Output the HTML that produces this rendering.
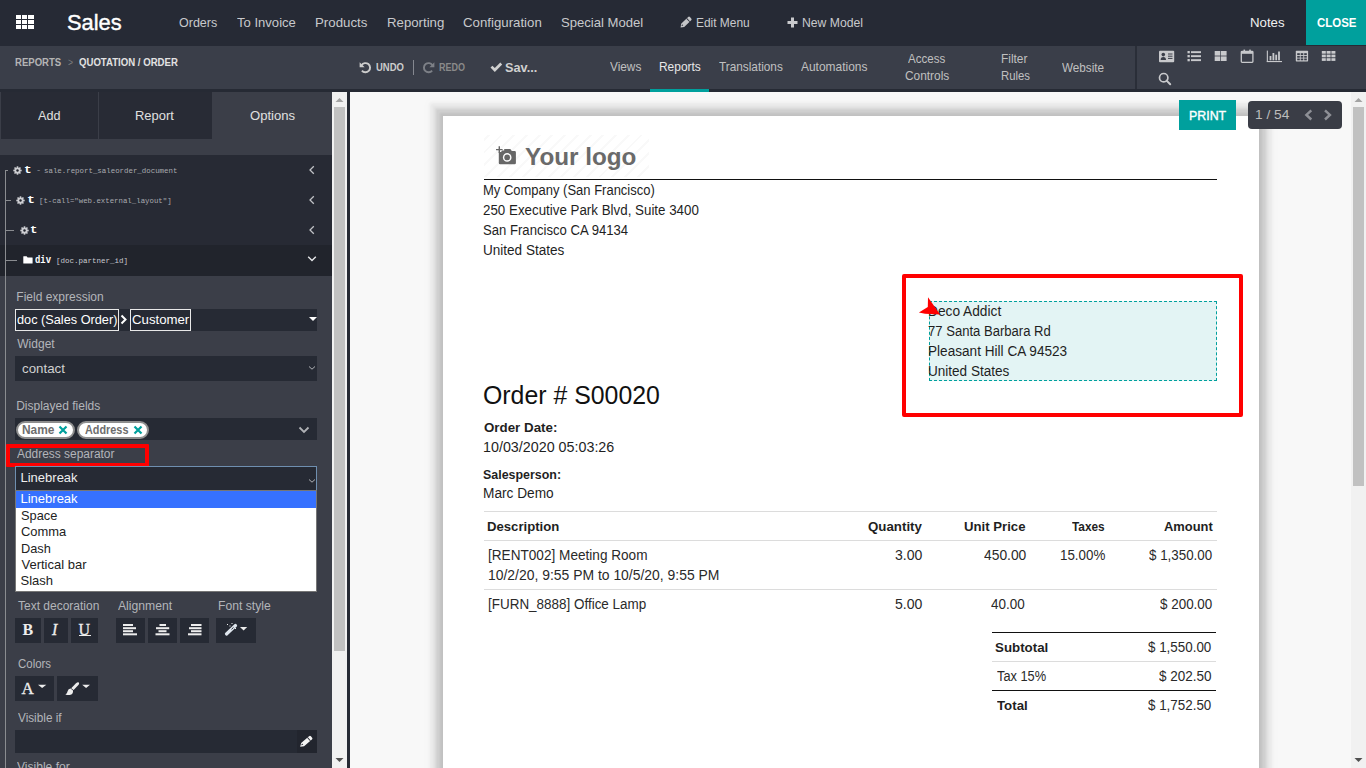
<!DOCTYPE html>
<html><head><meta charset="utf-8"><style>
html,body{margin:0;padding:0;width:1366px;height:768px;overflow:hidden;background:#f8f8f8;font-family:"Liberation Sans",sans-serif}
.r{position:absolute}
.t{position:absolute;white-space:nowrap;transform-origin:0 0}
svg{position:absolute;overflow:visible}
</style></head><body>
<!-- navbar -->
<div class="r" style="left:0;top:0;width:1366px;height:46px;background:#262a35"></div>
<div class="r" style="left:1306px;top:0;width:60px;height:45px;background:#00a09d"></div>
<!-- apps grid -->
<svg style="left:0;top:0" width="40" height="40"><g fill="#fff">
<rect x="16" y="15" width="5" height="4"/><rect x="22" y="15" width="5" height="4"/><rect x="28" y="15" width="6" height="4"/>
<rect x="16" y="20" width="5" height="4"/><rect x="22" y="20" width="5" height="4"/><rect x="28" y="20" width="6" height="4"/>
<rect x="16" y="25" width="5" height="4"/><rect x="22" y="25" width="5" height="4"/><rect x="28" y="25" width="6" height="4"/>
</g></svg>
<!-- pencil edit menu -->
<svg style="left:0;top:0" width="700" height="40"><g transform="translate(680.6,27.4) rotate(-44)"><path d="M0 0 L2.9 -2.2 L12.6 -2.2 Q13.9 -2.2 13.9 -0.9 L13.9 0.9 Q13.9 2.2 12.6 2.2 L2.9 2.2 Z" fill="#c4c5c8"/><rect x="10.2" y="-2.3" width="0.8" height="4.6" fill="#262a35"/><path d="M1.6 -0.4 L3.2 -1.2 L3.2 0.4 Z" fill="#262a35"/></g></svg>
<!-- plus -->
<svg style="left:787px;top:17px" width="11" height="11" viewBox="0 0 11 11"><path fill="#c8c9cc" d="M4 0.5h3v3.5h3.5v3h-3.5v3.5h-3v-3.5h-3.5v-3h3.5z"/></svg>

<!-- subnav -->
<div class="r" style="left:0;top:46px;width:1366px;height:43px;background:#3a3e49"></div>
<div class="r" style="left:0;top:89px;width:1366px;height:3px;background:#262a34"></div>
<div class="r" style="left:650px;top:89px;width:59px;height:3px;background:#00a09d"></div>
<div class="r" style="left:1135px;top:46px;width:2px;height:43px;background:#2a2e38"></div>
<!-- undo icon -->
<svg style="left:359px;top:61px" width="13" height="13" viewBox="0 0 13 13"><path d="M2.6 4.2 A4.6 4.6 0 1 1 2.9 9.6" fill="none" stroke="#cccccc" stroke-width="1.9"/><path d="M0.6 1.2 L0.6 6.2 L5.6 6.2 Z" fill="#cccccc"/></svg>
<div class="r" style="left:413px;top:60px;width:1px;height:15px;background:#858890"></div>
<!-- redo icon -->
<svg style="left:422px;top:61px" width="13" height="13" viewBox="0 0 13 13"><path d="M10.4 4.2 A4.6 4.6 0 1 0 10.1 9.6" fill="none" stroke="#7d8087" stroke-width="1.9"/><path d="M12.4 1.2 L12.4 6.2 L7.4 6.2 Z" fill="#7d8087"/></svg>
<!-- check -->
<svg style="left:490px;top:62px" width="13" height="11" viewBox="0 0 13 11"><path d="M0.5 5.6 L2.4 3.7 L4.8 6.1 L10.3 0.6 L12.2 2.5 L4.8 9.9 Z" fill="#d0d0d0"/></svg>

<!-- view icons -->
<svg style="left:1159px;top:50px" width="16" height="13" viewBox="0 0 16 13"><rect x="0" y="0.8" width="15.2" height="11.4" rx="1" fill="#c8c9cc"/><circle cx="4.3" cy="4.6" r="1.8" fill="#3a3e49"/><path d="M1.6 10 Q1.6 7 4.3 7 Q7 7 7 10 Z" fill="#3a3e49"/><rect x="9" y="3.5" width="4.5" height="1" fill="#3a3e49"/><rect x="9" y="5.7" width="4.5" height="1" fill="#3a3e49"/><rect x="9" y="7.9" width="4.5" height="1" fill="#3a3e49"/></svg>
<svg style="left:1187px;top:50px" width="15" height="13" viewBox="0 0 15 13"><g fill="#c8c9cc"><rect x="0.5" y="1" width="2.3" height="2.3"/><rect x="0.5" y="5" width="2.3" height="2.3"/><rect x="0.5" y="9" width="2.3" height="2.3"/><rect x="4" y="1.2" width="10" height="1.9"/><rect x="4" y="5.2" width="10" height="1.9"/><rect x="4" y="9.2" width="10" height="1.9"/></g></svg>
<svg style="left:1214px;top:50px" width="14" height="12" viewBox="0 0 14 12"><g fill="#c8c9cc"><rect x="0.7" y="1" width="5.6" height="4.6"/><rect x="7" y="1" width="5.6" height="4.6"/><rect x="0.7" y="6.4" width="5.6" height="4.6"/><rect x="7" y="6.4" width="5.6" height="4.6"/></g></svg>
<svg style="left:1240px;top:49px" width="15" height="15" viewBox="0 0 15 15"><rect x="1.3" y="2.3" width="11.6" height="11" rx="0.8" fill="none" stroke="#c8c9cc" stroke-width="1.3"/><rect x="1.3" y="2.3" width="11.6" height="2.5" fill="#c8c9cc"/><rect x="3.5" y="0.6" width="1.6" height="3" fill="#c8c9cc"/><rect x="9.2" y="0.6" width="1.6" height="3" fill="#c8c9cc"/></svg>
<svg style="left:1266px;top:50px" width="17" height="13" viewBox="0 0 17 13"><g fill="#c8c9cc"><rect x="0.8" y="0.6" width="1.1" height="11.4"/><rect x="0.8" y="11" width="15.2" height="1.1"/><rect x="3.6" y="6" width="1.8" height="4.3"/><rect x="6.5" y="3" width="1.8" height="7.3"/><rect x="9.3" y="4.7" width="1.8" height="5.6"/><rect x="12.1" y="1.5" width="1.8" height="8.8"/></g></svg>
<svg style="left:1295px;top:50px" width="14" height="12" viewBox="0 0 14 12"><rect x="0.8" y="0.8" width="12.3" height="10.6" rx="0.6" fill="#c8c9cc"/><g fill="#3a3e49"><rect x="2.2" y="3.2" width="2.6" height="1.8"/><rect x="5.7" y="3.2" width="2.6" height="1.8"/><rect x="9.2" y="3.2" width="2.6" height="1.8"/><rect x="2.2" y="5.9" width="2.6" height="1.8"/><rect x="5.7" y="5.9" width="2.6" height="1.8"/><rect x="9.2" y="5.9" width="2.6" height="1.8"/><rect x="2.2" y="8.5" width="2.6" height="1.8"/><rect x="5.7" y="8.5" width="2.6" height="1.8"/><rect x="9.2" y="8.5" width="2.6" height="1.8"/></g></svg>
<svg style="left:1321px;top:50px" width="15" height="12" viewBox="0 0 15 12"><g fill="#c8c9cc"><rect x="0.8" y="1" width="4" height="2.7"/><rect x="5.6" y="1" width="4" height="2.7"/><rect x="10.4" y="1" width="4" height="2.7"/><rect x="0.8" y="4.6" width="4" height="2.7"/><rect x="5.6" y="4.6" width="4" height="2.7"/><rect x="10.4" y="4.6" width="4" height="2.7"/><rect x="0.8" y="8.2" width="4" height="2.7"/><rect x="5.6" y="8.2" width="4" height="2.7"/><rect x="10.4" y="8.2" width="4" height="2.7"/></g></svg>
<svg style="left:1158px;top:72px" width="14" height="14" viewBox="0 0 14 14"><circle cx="5.7" cy="5.7" r="4.2" fill="none" stroke="#c8c9cc" stroke-width="1.7"/><path d="M8.6 8.6 L12.2 12.2" stroke="#c8c9cc" stroke-width="2" stroke-linecap="round"/></svg>

<!-- sidebar -->
<div class="r" style="left:0;top:92px;width:332px;height:676px;background:#3b3e48"></div>
<div class="r" style="left:1px;top:92px;width:97px;height:47px;background:#282b35"></div>
<div class="r" style="left:99px;top:92px;width:113px;height:47px;background:#282b35"></div>
<div class="r" style="left:0;top:155px;width:332px;height:90px;background:#272a34"></div>
<div class="r" style="left:0;top:245px;width:332px;height:31px;background:#21242c"></div>
<!-- tree line -->
<div class="r" style="left:5px;top:170px;width:1px;height:598px;background:#8a8c90"></div>
<div class="r" style="left:5px;top:170px;width:3px;height:1px;background:#8a8c90"></div>
<div class="r" style="left:5px;top:200px;width:6px;height:1px;background:#8a8c90"></div>
<div class="r" style="left:5px;top:230px;width:9px;height:1px;background:#8a8c90"></div>
<div class="r" style="left:5px;top:260px;width:12px;height:1px;background:#8a8c90"></div>
<!-- gears -->
<svg style="left:13.0px;top:165.5px" width="9" height="9" viewBox="0 0 9 9"><g fill="#cdced2"><circle cx="4.5" cy="4.5" r="3.1"/><rect x="3.7" y="0.3" width="1.6" height="8.4"/><rect x="0.3" y="3.7" width="8.4" height="1.6"/><rect x="3.7" y="0.3" width="1.6" height="8.4" transform="rotate(45 4.5 4.5)"/><rect x="3.7" y="0.3" width="1.6" height="8.4" transform="rotate(-45 4.5 4.5)"/></g><circle cx="4.5" cy="4.5" r="1.2" fill="#20232b"/></svg>
<svg style="left:16.3px;top:195.5px" width="9" height="9" viewBox="0 0 9 9"><g fill="#cdced2"><circle cx="4.5" cy="4.5" r="3.1"/><rect x="3.7" y="0.3" width="1.6" height="8.4"/><rect x="0.3" y="3.7" width="8.4" height="1.6"/><rect x="3.7" y="0.3" width="1.6" height="8.4" transform="rotate(45 4.5 4.5)"/><rect x="3.7" y="0.3" width="1.6" height="8.4" transform="rotate(-45 4.5 4.5)"/></g><circle cx="4.5" cy="4.5" r="1.2" fill="#20232b"/></svg>
<svg style="left:19.5px;top:225.5px" width="9" height="9" viewBox="0 0 9 9"><g fill="#cdced2"><circle cx="4.5" cy="4.5" r="3.1"/><rect x="3.7" y="0.3" width="1.6" height="8.4"/><rect x="0.3" y="3.7" width="8.4" height="1.6"/><rect x="3.7" y="0.3" width="1.6" height="8.4" transform="rotate(45 4.5 4.5)"/><rect x="3.7" y="0.3" width="1.6" height="8.4" transform="rotate(-45 4.5 4.5)"/></g><circle cx="4.5" cy="4.5" r="1.2" fill="#20232b"/></svg>
<!-- folder -->
<svg style="left:22.5px;top:255.5px" width="10" height="8" viewBox="0 0 10 8"><path d="M0.3 0.6 Q0.3 0.2 0.7 0.2 L3.6 0.2 L4.6 1.4 L9.2 1.4 Q9.6 1.4 9.6 1.8 L9.6 7.2 Q9.6 7.6 9.2 7.6 L0.7 7.6 Q0.3 7.6 0.3 7.2 Z" fill="#ffffff"/></svg>
<!-- chevrons -->
<svg style="left:308px;top:165px" width="8" height="10" viewBox="0 0 8 10"><path d="M5.8 1.2 L2 5 L5.8 8.8" fill="none" stroke="#c0c2c6" stroke-width="1.3"/></svg>
<svg style="left:308px;top:195px" width="8" height="10" viewBox="0 0 8 10"><path d="M5.8 1.2 L2 5 L5.8 8.8" fill="none" stroke="#c0c2c6" stroke-width="1.3"/></svg>
<svg style="left:308px;top:225px" width="8" height="10" viewBox="0 0 8 10"><path d="M5.8 1.2 L2 5 L5.8 8.8" fill="none" stroke="#c0c2c6" stroke-width="1.3"/></svg>
<svg style="left:307px;top:255px" width="10" height="8" viewBox="0 0 10 8"><path d="M1.2 1.8 L5 5.6 L8.8 1.8" fill="none" stroke="#e6e7ea" stroke-width="1.4"/></svg>

<!-- field expression input -->
<div class="r" style="left:15px;top:309px;width:302px;height:22px;background:#262a34"></div>
<div class="r" style="left:15px;top:309px;width:102px;height:20px;border:1px solid #e8e8e8"></div>
<svg style="left:120px;top:314px" width="8" height="11" viewBox="0 0 8 11"><path d="M1.5 1.5 L5.5 5.5 L1.5 9.5" fill="none" stroke="#ffffff" stroke-width="2"/></svg>
<div class="r" style="left:130px;top:309px;width:59px;height:20px;border:1px solid #e8e8e8"></div>
<svg style="left:308px;top:316px" width="10" height="6" viewBox="0 0 10 6"><path d="M1 1 L9 1 L5 5 Z" fill="#ffffff"/></svg>
<!-- widget select -->
<div class="r" style="left:15px;top:356px;width:302px;height:25px;background:#262a34"></div>
<svg style="left:308px;top:365px" width="8" height="6" viewBox="0 0 8 6"><path d="M1 1.5 L4 4.2 L7 1.5" fill="none" stroke="#b0b2b6" stroke-width="1"/></svg>
<!-- displayed fields -->
<div class="r" style="left:15px;top:418px;width:302px;height:22px;background:#262a34"></div>
<div class="r" style="box-sizing:border-box;left:15.5px;top:421px;width:59px;height:17.5px;border:2px solid #8e8e8e;border-radius:9px;background:#fff"></div>
<div class="r" style="box-sizing:border-box;left:77px;top:421px;width:72px;height:17.5px;border:2px solid #8e8e8e;border-radius:9px;background:#fff"></div>
<svg style="left:58px;top:424.5px" width="10" height="10" viewBox="0 0 10 10"><path d="M1.5 1.5 L8.5 8.5 M8.5 1.5 L1.5 8.5" stroke="#00a09d" stroke-width="2.2"/></svg>
<svg style="left:132.5px;top:424.5px" width="10" height="10" viewBox="0 0 10 10"><path d="M1.5 1.5 L8.5 8.5 M8.5 1.5 L1.5 8.5" stroke="#00a09d" stroke-width="2.2"/></svg>
<svg style="left:298px;top:426px" width="12" height="8" viewBox="0 0 12 8"><path d="M1.5 1.5 L6 6 L10.5 1.5" fill="none" stroke="#b0b2b6" stroke-width="1.8"/></svg>
<!-- red box label -->
<div class="r" style="left:6px;top:444px;width:135px;height:15px;border:4px solid #ff0000;border-radius:1px"></div>
<!-- address separator select -->
<div class="r" style="left:15px;top:466px;width:300px;height:23px;background:#262a34;border:1px solid #6f8fb0;border-bottom:none"></div>
<svg style="left:308px;top:478px" width="8" height="6" viewBox="0 0 8 6"><path d="M1 1.5 L4 4.2 L7 1.5" fill="none" stroke="#b0b2b6" stroke-width="1"/></svg>
<div class="r" style="left:15px;top:490px;width:300px;height:100px;background:#fff;border:1px solid #767676"></div>
<div class="r" style="left:16px;top:491px;width:300px;height:17px;background:#3671ff"></div>
<!-- text decoration buttons -->
<div class="r" style="left:15px;top:618px;width:26px;height:25px;background:#262a34"></div>
<div class="r" style="left:44px;top:618px;width:24px;height:25px;background:#262a34"></div>
<div class="r" style="left:71px;top:618px;width:27px;height:25px;background:#262a34"></div>
<div class="t" style="left:22.5px;top:622px;font:bold 16px/16px 'Liberation Serif',serif;color:#ededed">B</div>
<div class="t" style="left:52px;top:622px;font:italic 16px/16px 'Liberation Serif',serif;color:#ededed;-webkit-text-stroke:0.3px #ededed">I</div>
<div class="t" style="left:78.5px;top:622px;font:16px/16px 'Liberation Serif',serif;color:#ededed;-webkit-text-stroke:0.3px #ededed">U</div>
<div class="r" style="left:79px;top:635px;width:12px;height:1.3px;background:#ededed"></div>
<div class="r" style="left:116px;top:618px;width:29px;height:25px;background:#262a34"></div>
<div class="r" style="left:148px;top:618px;width:29px;height:25px;background:#262a34"></div>
<div class="r" style="left:180px;top:618px;width:29px;height:25px;background:#262a34"></div>
<div class="r" style="left:216px;top:618px;width:40px;height:25px;background:#262a34"></div>
<svg style="left:0;top:0" width="300" height="700"><g fill="#ededed">
<rect x="123" y="624" width="10" height="2"/><rect x="123" y="627.2" width="13" height="2"/><rect x="123" y="630.2" width="10" height="2"/><rect x="123" y="633.3" width="14" height="2"/>
<rect x="159.5" y="624" width="6.5" height="2"/><rect x="156" y="627.2" width="13.2" height="2"/><rect x="158.5" y="630.2" width="8" height="2"/><rect x="155.5" y="633.3" width="14" height="2"/>
<rect x="191" y="624" width="10.5" height="2"/><rect x="189" y="627.2" width="12.5" height="2"/><rect x="191" y="630.2" width="10.5" height="2"/><rect x="188" y="633.3" width="13.5" height="2"/>
<path d="M240 627 L247.2 627 L243.6 630.4 Z"/>
<rect x="227" y="624" width="1" height="1"/><rect x="229.5" y="625.5" width="1" height="1"/><rect x="231.5" y="623" width="1" height="1"/><rect x="235" y="628" width="1" height="1"/>
<path d="M38 684.8 L46.3 684.8 L42.15 688 Z"/>
<path d="M82.2 684.8 L90 684.8 L86.1 688 Z"/>
</g>
<path d="M226.5 634 L235.5 625.5" stroke="#dfe6ee" stroke-width="3.2" stroke-linecap="round"/>
<path d="M231.5 629.3 L233.5 627.4" stroke="#262a34" stroke-width="1"/>
</svg>
<!-- colors buttons -->
<div class="r" style="left:15px;top:676px;width:39px;height:25px;background:#262a34"></div>
<div class="r" style="left:57px;top:676px;width:41px;height:25px;background:#262a34"></div>
<div class="t" style="left:21.5px;top:680px;font:17px/17px 'Liberation Serif',serif;color:#ededed;-webkit-text-stroke:0.3px #ededed">A</div>
<svg style="left:0;top:0" width="300" height="700"><g fill="#ededed">
<path d="M38 684.8 L46.3 684.8 L42.15 688 Z"/>
<path d="M82.2 684.8 L90 684.8 L86.1 688 Z"/>
<path d="M78.8 682.4 Q79.6 683.2 78.6 684.8 L73.6 690 L71.2 688.2 L76 683.2 Q77.6 681.8 78.8 682.4 Z"/>
<path d="M70.6 688.6 L73 690.4 Q73.4 693.6 70.6 694.8 Q68 695.6 65.4 694.4 Q67.2 693.4 67.6 691.2 Q68.2 688.8 70.6 688.6 Z"/>
</g></svg>
<!-- visible if -->
<div class="r" style="left:15px;top:730px;width:302px;height:23px;background:#262a34"></div>
<div class="r" style="left:297px;top:730px;width:20px;height:23px;background:#22252e"></div>
<svg style="left:0;top:0" width="330" height="768"><g transform="translate(300.2,746.8) rotate(-41)"><path d="M0 0 L3.2 -2.2 L13.6 -2.2 Q15 -2.2 15 -0.9 L15 0.9 Q15 2.2 13.6 2.2 L3.2 2.2 Z" fill="#f4f4f4"/><rect x="11.2" y="-2.4" width="0.8" height="4.8" fill="#22252e"/><path d="M1.8 -0.5 L3.6 -1.3 L3.6 0.5 Z" fill="#22252e"/></g></svg>

<!-- sidebar scrollbar -->
<div class="r" style="left:332px;top:92px;width:15px;height:676px;background:#f1f1f1"></div>
<div class="r" style="left:334px;top:107px;width:11px;height:544px;background:#c1c1c1"></div>
<svg style="left:332px;top:92px" width="15" height="15" viewBox="0 0 15 15"><path d="M3.5 10 L7.5 6 L11.5 10 Z" fill="#a3a3a3"/></svg>
<svg style="left:332px;top:753px" width="15" height="15" viewBox="0 0 15 15"><path d="M3.5 5 L7.5 9 L11.5 5 Z" fill="#505050"/></svg>
<div class="r" style="left:347px;top:92px;width:3px;height:676px;background:#262a34"></div>

<!-- main scrollbar -->
<div class="r" style="left:1351px;top:92px;width:15px;height:676px;background:#f1f1f1"></div>
<div class="r" style="left:1353px;top:107px;width:11px;height:379px;background:#c1c1c1"></div>
<svg style="left:1351px;top:92px" width="15" height="15" viewBox="0 0 15 15"><path d="M3.5 10 L7.5 6 L11.5 10 Z" fill="#a3a3a3"/></svg>
<svg style="left:1351px;top:753px" width="15" height="15" viewBox="0 0 15 15"><path d="M3.5 5 L7.5 9 L11.5 5 Z" fill="#505050"/></svg>

<!-- report page -->
<div class="r" style="left:443px;top:116px;width:816px;height:700px;background:#fff;box-shadow:0 0 2px 3px rgba(0,0,0,0.07),0 0 2px 7px rgba(0,0,0,0.06),0 0 2px 9px rgba(0,0,0,0.04),0 0 3px 13px rgba(0,0,0,0.05),0 0 8px 16px rgba(0,0,0,0.015)"></div>
<!-- logo stripes -->
<div class="r" style="left:484px;top:135px;width:165px;height:42px;background:repeating-linear-gradient(-45deg,#ffffff 0,#ffffff 7px,#f9f9f9 7px,#f9f9f9 9px)"></div>
<svg style="left:492px;top:142px" width="30" height="26" viewBox="0 0 30 26"><path d="M6.8 10 L7.6 10 L9 10 L10.2 8.6 L12.2 8.6 L12.2 7.1 L18.3 7.1 L19.8 9 L22.6 9 Q23.9 9 23.9 10.3 L23.9 21 Q23.9 22.2 22.6 22.2 L8.1 22.2 Q6.8 22.2 6.8 21 Z" fill="#676767"/><circle cx="15.2" cy="15.4" r="4.3" fill="#fff"/><circle cx="15.2" cy="15.4" r="2.9" fill="#676767"/><path d="M4 7.6 L10.6 7.6 M7.3 4.3 L7.3 10.9" stroke="#676767" stroke-width="1.4"/></svg>
<div class="r" style="left:484px;top:179px;width:733px;height:1px;background:#111"></div>
<!-- red box -->
<div class="r" style="left:902px;top:274px;width:333px;height:135px;border:4px solid #ff0000;border-radius:2px"></div>
<div class="r" style="left:929px;top:301px;width:286px;height:78px;border:1px dashed #00a09d;background:#e3f4f4"></div>
<!-- table lines -->
<div class="r" style="left:484px;top:511px;width:733px;height:1px;background:#dcdcdc"></div>
<div class="r" style="left:484px;top:540px;width:733px;height:1px;background:#dcdcdc"></div>
<div class="r" style="left:484px;top:589px;width:733px;height:1px;background:#dcdcdc"></div>
<div class="r" style="left:992px;top:632px;width:224px;height:1px;background:#111"></div>
<div class="r" style="left:992px;top:661px;width:224px;height:1px;background:#dcdcdc"></div>
<div class="r" style="left:992px;top:690px;width:224px;height:1px;background:#111"></div>
<!-- print + pager -->
<div class="r" style="left:1179px;top:100px;width:57px;height:30px;background:#00a09d"></div>
<div class="r" style="left:1248px;top:101px;width:94px;height:28px;background:#3a3d46;border-radius:4px"></div>
<svg style="left:1303px;top:107px" width="11" height="15" viewBox="0 0 11 15"><path d="M8.3 3.3 L3.4 7.9 L8.3 12.5" fill="none" stroke="#8e9096" stroke-width="2.5"/></svg>
<svg style="left:1322px;top:107px" width="11" height="15" viewBox="0 0 11 15"><path d="M3 3.3 L7.9 7.9 L3 12.5" fill="none" stroke="#8e9096" stroke-width="2.5"/></svg>

<div class="t" id="t0" style="left:66.71px;top:12px;font-size:22px;line-height:22px;color:#ffffff;font-weight:normal;font-family:'Liberation Sans',sans-serif;transform:scaleX(0.9943);-webkit-text-stroke:0.4px #ffffff;">Sales</div>
<div class="t" id="t1" style="left:178.50px;top:16px;font-size:13px;line-height:13px;color:#c8c9cc;font-weight:normal;font-family:'Liberation Sans',sans-serif;transform:scaleX(0.9615);">Orders</div>
<div class="t" id="t2" style="left:237.00px;top:16px;font-size:13px;line-height:13px;color:#c8c9cc;font-weight:normal;font-family:'Liberation Sans',sans-serif;transform:scaleX(1.0052);">To Invoice</div>
<div class="t" id="t3" style="left:314.98px;top:16px;font-size:13px;line-height:13px;color:#c8c9cc;font-weight:normal;font-family:'Liberation Sans',sans-serif;transform:scaleX(1.0200);">Products</div>
<div class="t" id="t4" style="left:386.58px;top:16px;font-size:13px;line-height:13px;color:#c8c9cc;font-weight:normal;font-family:'Liberation Sans',sans-serif;transform:scaleX(1.0164);">Reporting</div>
<div class="t" id="t5" style="left:462.58px;top:16px;font-size:13px;line-height:13px;color:#c8c9cc;font-weight:normal;font-family:'Liberation Sans',sans-serif;transform:scaleX(1.0184);">Configuration</div>
<div class="t" id="t6" style="left:560.99px;top:16px;font-size:13px;line-height:13px;color:#c8c9cc;font-weight:normal;font-family:'Liberation Sans',sans-serif;transform:scaleX(1.0075);">Special Model</div>
<div class="t" id="t7" style="left:696.08px;top:16px;font-size:13px;line-height:13px;color:#c8c9cc;font-weight:normal;font-family:'Liberation Sans',sans-serif;transform:scaleX(0.9175);">Edit Menu</div>
<div class="t" id="t8" style="left:802.46px;top:16px;font-size:13px;line-height:13px;color:#c8c9cc;font-weight:normal;font-family:'Liberation Sans',sans-serif;transform:scaleX(0.9375);">New Model</div>
<div class="t" id="t9" style="left:1250.38px;top:16px;font-size:13px;line-height:13px;color:#f0f0f0;font-weight:normal;font-family:'Liberation Sans',sans-serif;transform:scaleX(1.0182);">Notes</div>
<div class="t" id="t10" style="left:1316.90px;top:16px;font-size:13px;line-height:13px;color:#ffffff;font-weight:bold;font-family:'Liberation Sans',sans-serif;transform:scaleX(0.8818);">CLOSE</div>
<div class="t" id="t11" style="left:15.13px;top:57px;font-size:11px;line-height:11px;color:#b4b4b4;font-weight:bold;font-family:'Liberation Sans',sans-serif;transform:scaleX(0.8692);">REPORTS</div>
<div class="t" id="t12" style="left:67.80px;top:57px;font-size:11px;line-height:11px;color:#7d7d7d;font-weight:normal;font-family:'Liberation Sans',sans-serif;transform:scaleX(0.7833);">&gt;</div>
<div class="t" id="t13" style="left:79.00px;top:57px;font-size:11px;line-height:11px;color:#e2e2e2;font-weight:bold;font-family:'Liberation Sans',sans-serif;transform:scaleX(0.8726);">QUOTATION / ORDER</div>
<div class="t" id="t14" style="left:376.20px;top:62px;font-size:11px;line-height:11px;color:#cccccc;font-weight:bold;font-family:'Liberation Sans',sans-serif;transform:scaleX(0.8625);">UNDO</div>
<div class="t" id="t15" style="left:438.78px;top:62px;font-size:11px;line-height:11px;color:#8a8a8a;font-weight:bold;font-family:'Liberation Sans',sans-serif;transform:scaleX(0.8194);">REDO</div>
<div class="t" id="t16" style="left:505.02px;top:61px;font-size:13px;line-height:13px;color:#d0d0d0;font-weight:bold;font-family:'Liberation Sans',sans-serif;transform:scaleX(0.9774);">Sav...</div>
<div class="t" id="t17" style="left:610.40px;top:60px;font-size:13px;line-height:13px;color:#c0c0c0;font-weight:normal;font-family:'Liberation Sans',sans-serif;transform:scaleX(0.9088);">Views</div>
<div class="t" id="t18" style="left:658.68px;top:60px;font-size:13px;line-height:13px;color:#e8e8e8;font-weight:normal;font-family:'Liberation Sans',sans-serif;transform:scaleX(0.9182);">Reports</div>
<div class="t" id="t19" style="left:718.50px;top:60px;font-size:13px;line-height:13px;color:#c0c0c0;font-weight:normal;font-family:'Liberation Sans',sans-serif;transform:scaleX(0.9071);">Translations</div>
<div class="t" id="t20" style="left:800.60px;top:60px;font-size:13px;line-height:13px;color:#c0c0c0;font-weight:normal;font-family:'Liberation Sans',sans-serif;transform:scaleX(0.9194);">Automations</div>
<div class="t" id="t21" style="left:908.20px;top:52px;font-size:13px;line-height:13px;color:#c0c0c0;font-weight:normal;font-family:'Liberation Sans',sans-serif;transform:scaleX(0.8881);">Access</div>
<div class="t" id="t22" style="left:904.59px;top:69px;font-size:13px;line-height:13px;color:#c0c0c0;font-weight:normal;font-family:'Liberation Sans',sans-serif;transform:scaleX(0.9149);">Controls</div>
<div class="t" id="t23" style="left:1001.49px;top:52px;font-size:13px;line-height:13px;color:#c0c0c0;font-weight:normal;font-family:'Liberation Sans',sans-serif;transform:scaleX(0.9143);">Filter</div>
<div class="t" id="t24" style="left:1000.53px;top:69px;font-size:13px;line-height:13px;color:#c0c0c0;font-weight:normal;font-family:'Liberation Sans',sans-serif;transform:scaleX(0.8719);">Rules</div>
<div class="t" id="t25" style="left:1061.90px;top:61px;font-size:13px;line-height:13px;color:#c0c0c0;font-weight:normal;font-family:'Liberation Sans',sans-serif;transform:scaleX(0.9000);">Website</div>
<div class="t" id="t26" style="left:37.90px;top:109px;font-size:13px;line-height:13px;color:#e0e0e0;font-weight:normal;font-family:'Liberation Sans',sans-serif;transform:scaleX(0.9696);">Add</div>
<div class="t" id="t27" style="left:135.11px;top:109px;font-size:13px;line-height:13px;color:#e0e0e0;font-weight:normal;font-family:'Liberation Sans',sans-serif;transform:scaleX(0.9947);">Report</div>
<div class="t" id="t28" style="left:249.80px;top:109px;font-size:13px;line-height:13px;color:#e0e0e0;font-weight:normal;font-family:'Liberation Sans',sans-serif;transform:scaleX(1.0068);">Options</div>
<div class="t" id="t29" style="left:24.14px;top:165px;font-size:11px;line-height:11px;color:#ffffff;font-weight:bold;font-family:'Liberation Mono',monospace;transform:scaleX(1.1600);">t</div>
<div class="t" id="t30" style="left:36.03px;top:167px;font-size:9px;line-height:9px;color:#8a8d94;font-weight:normal;font-family:'Liberation Mono',monospace;transform:scaleX(0.9667);">-</div>
<div class="t" id="t31" style="left:44.07px;top:167px;font-size:8px;line-height:8px;color:#a9abb0;font-weight:normal;font-family:'Liberation Mono',monospace;transform:scaleX(0.9261);">sale.report_saleorder_document</div>
<div class="t" id="t32" style="left:26.60px;top:195px;font-size:11px;line-height:11px;color:#ffffff;font-weight:bold;font-family:'Liberation Mono',monospace;transform:scaleX(1.2000);">t</div>
<div class="t" id="t33" style="left:38.98px;top:197px;font-size:8px;line-height:8px;color:#a9abb0;font-weight:normal;font-family:'Liberation Mono',monospace;transform:scaleX(0.9204);">[t-call="web.external_layout"]</div>
<div class="t" id="t34" style="left:30.18px;top:225px;font-size:11px;line-height:11px;color:#ffffff;font-weight:bold;font-family:'Liberation Mono',monospace;transform:scaleX(1.1200);">t</div>
<div class="t" id="t35" style="left:34.70px;top:255px;font-size:11px;line-height:11px;color:#ffffff;font-weight:bold;font-family:'Liberation Mono',monospace;transform:scaleX(0.8050);">div</div>
<div class="t" id="t36" style="left:56.26px;top:257px;font-size:8px;line-height:8px;color:#c9cbd0;font-weight:normal;font-family:'Liberation Mono',monospace;transform:scaleX(0.9378);">[doc.partner_id]</div>
<div class="t" id="t37" style="left:16.30px;top:291px;font-size:12px;line-height:12px;color:#b3b5ba;font-weight:normal;font-family:'Liberation Sans',sans-serif;">Field expression</div>
<div class="t" id="t38" style="left:17.30px;top:313px;font-size:13px;line-height:13px;color:#ffffff;font-weight:normal;font-family:'Liberation Sans',sans-serif;transform:scaleX(0.9784);">doc (Sales Order)</div>
<div class="t" id="t39" style="left:131.98px;top:313px;font-size:13px;line-height:13px;color:#ffffff;font-weight:normal;font-family:'Liberation Sans',sans-serif;transform:scaleX(1.0164);">Customer</div>
<div class="t" id="t40" style="left:17.30px;top:338px;font-size:12px;line-height:12px;color:#b3b5ba;font-weight:normal;font-family:'Liberation Sans',sans-serif;">Widget</div>
<div class="t" id="t41" style="left:21.70px;top:362px;font-size:13px;line-height:13px;color:#d0d0d0;font-weight:normal;font-family:'Liberation Sans',sans-serif;transform:scaleX(1.0238);">contact</div>
<div class="t" id="t42" style="left:16.20px;top:400px;font-size:12px;line-height:12px;color:#b3b5ba;font-weight:normal;font-family:'Liberation Sans',sans-serif;">Displayed fields</div>
<div class="t" id="t43" style="left:21.91px;top:424px;font-size:12px;line-height:12px;color:#6e6e6e;font-weight:bold;font-family:'Liberation Sans',sans-serif;transform:scaleX(0.9935);">Name</div>
<div class="t" id="t44" style="left:84.50px;top:424px;font-size:12px;line-height:12px;color:#6e6e6e;font-weight:bold;font-family:'Liberation Sans',sans-serif;transform:scaleX(0.9042);">Address</div>
<div class="t" id="t45" style="left:17.20px;top:448px;font-size:12px;line-height:12px;color:#b3b5ba;font-weight:normal;font-family:'Liberation Sans',sans-serif;transform:scaleX(0.9939);">Address separator</div>
<div class="t" id="t46" style="left:20.50px;top:471px;font-size:13px;line-height:13px;color:#eeeeee;font-weight:normal;font-family:'Liberation Sans',sans-serif;">Linebreak</div>
<div class="t" id="t47" style="left:20.50px;top:492px;font-size:13px;line-height:13px;color:#ffffff;font-weight:normal;font-family:'Liberation Sans',sans-serif;">Linebreak</div>
<div class="t" id="t48" style="left:20.52px;top:509px;font-size:13px;line-height:13px;color:#222222;font-weight:normal;font-family:'Liberation Sans',sans-serif;transform:scaleX(0.9833);">Space</div>
<div class="t" id="t49" style="left:20.51px;top:525px;font-size:13px;line-height:13px;color:#222222;font-weight:normal;font-family:'Liberation Sans',sans-serif;transform:scaleX(0.9933);">Comma</div>
<div class="t" id="t50" style="left:20.52px;top:542px;font-size:13px;line-height:13px;color:#222222;font-weight:normal;font-family:'Liberation Sans',sans-serif;transform:scaleX(0.9828);">Dash</div>
<div class="t" id="t51" style="left:21.50px;top:558px;font-size:13px;line-height:13px;color:#222222;font-weight:normal;font-family:'Liberation Sans',sans-serif;">Vertical bar</div>
<div class="t" id="t52" style="left:20.50px;top:574px;font-size:13px;line-height:13px;color:#222222;font-weight:normal;font-family:'Liberation Sans',sans-serif;">Slash</div>
<div class="t" id="t53" style="left:18.00px;top:600px;font-size:12px;line-height:12px;color:#b3b5ba;font-weight:normal;font-family:'Liberation Sans',sans-serif;">Text decoration</div>
<div class="t" id="t54" style="left:118.00px;top:600px;font-size:12px;line-height:12px;color:#b3b5ba;font-weight:normal;font-family:'Liberation Sans',sans-serif;transform:scaleX(1.0151);">Alignment</div>
<div class="t" id="t55" style="left:217.59px;top:600px;font-size:12px;line-height:12px;color:#b3b5ba;font-weight:normal;font-family:'Liberation Sans',sans-serif;transform:scaleX(1.0137);">Font style</div>
<div class="t" id="t56" style="left:18.00px;top:658px;font-size:12px;line-height:12px;color:#b3b5ba;font-weight:normal;font-family:'Liberation Sans',sans-serif;transform:scaleX(0.9543);">Colors</div>
<div class="t" id="t57" style="left:18.00px;top:712px;font-size:12px;line-height:12px;color:#b3b5ba;font-weight:normal;font-family:'Liberation Sans',sans-serif;transform:scaleX(0.9800);">Visible if</div>
<div class="t" id="t58" style="left:17.40px;top:761px;font-size:12px;line-height:12px;color:#b3b5ba;font-weight:normal;font-family:'Liberation Sans',sans-serif;transform:scaleX(1.0057);">Visible for</div>
<div class="t" id="t59" style="left:525.35px;top:146px;font-size:23px;line-height:23px;color:#6a6a6a;font-weight:bold;font-family:'Liberation Sans',sans-serif;transform:scaleX(1.0548);">Your logo</div>
<div class="t" id="t60" style="left:483.47px;top:183px;font-size:14px;line-height:14px;color:#1f1f1f;font-weight:normal;font-family:'Liberation Sans',sans-serif;transform:scaleX(0.9277);">My Company (San Francisco)</div>
<div class="t" id="t61" style="left:483.45px;top:203px;font-size:14px;line-height:14px;color:#1f1f1f;font-weight:normal;font-family:'Liberation Sans',sans-serif;transform:scaleX(0.9533);">250 Executive Park Blvd, Suite 3400</div>
<div class="t" id="t62" style="left:483.46px;top:223px;font-size:14px;line-height:14px;color:#1f1f1f;font-weight:normal;font-family:'Liberation Sans',sans-serif;transform:scaleX(0.9370);">San Francisco CA 94134</div>
<div class="t" id="t63" style="left:483.43px;top:243px;font-size:14px;line-height:14px;color:#1f1f1f;font-weight:normal;font-family:'Liberation Sans',sans-serif;transform:scaleX(0.9675);">United States</div>
<div class="t" id="t64" style="left:928.02px;top:304px;font-size:14px;line-height:14px;color:#1f1f1f;font-weight:normal;font-family:'Liberation Sans',sans-serif;transform:scaleX(0.9797);">Deco Addict</div>
<div class="t" id="t65" style="left:928.07px;top:324px;font-size:14px;line-height:14px;color:#1f1f1f;font-weight:normal;font-family:'Liberation Sans',sans-serif;transform:scaleX(0.9338);">77 Santa Barbara Rd</div>
<div class="t" id="t66" style="left:928.03px;top:344px;font-size:14px;line-height:14px;color:#1f1f1f;font-weight:normal;font-family:'Liberation Sans',sans-serif;transform:scaleX(0.9718);">Pleasant Hill CA 94523</div>
<div class="t" id="t67" style="left:928.03px;top:364px;font-size:14px;line-height:14px;color:#1f1f1f;font-weight:normal;font-family:'Liberation Sans',sans-serif;transform:scaleX(0.9675);">United States</div>
<div class="t" id="t68" style="left:483.41px;top:383px;font-size:25px;line-height:25px;color:#111111;font-weight:normal;font-family:'Liberation Sans',sans-serif;transform:scaleX(0.9943);">Order # S00020</div>
<div class="t" id="t69" style="left:484.40px;top:421px;font-size:13px;line-height:13px;color:#1f1f1f;font-weight:bold;font-family:'Liberation Sans',sans-serif;transform:scaleX(1.0254);">Order Date:</div>
<div class="t" id="t70" style="left:483.38px;top:440px;font-size:14px;line-height:14px;color:#1f1f1f;font-weight:normal;font-family:'Liberation Sans',sans-serif;transform:scaleX(1.0220);">10/03/2020 05:03:26</div>
<div class="t" id="t71" style="left:483.44px;top:468px;font-size:13px;line-height:13px;color:#1f1f1f;font-weight:bold;font-family:'Liberation Sans',sans-serif;transform:scaleX(0.9563);">Salesperson:</div>
<div class="t" id="t72" style="left:483.42px;top:486px;font-size:14px;line-height:14px;color:#1f1f1f;font-weight:normal;font-family:'Liberation Sans',sans-serif;transform:scaleX(0.9775);">Marc Demo</div>
<div class="t" id="t73" style="left:487.49px;top:520px;font-size:13px;line-height:13px;color:#1f1f1f;font-weight:bold;font-family:'Liberation Sans',sans-serif;transform:scaleX(1.0114);">Description</div>
<div class="t" id="t74" style="left:868.10px;top:520px;font-size:13px;line-height:13px;color:#1f1f1f;font-weight:bold;font-family:'Liberation Sans',sans-serif;transform:scaleX(1.0226);">Quantity</div>
<div class="t" id="t75" style="left:964.39px;top:520px;font-size:13px;line-height:13px;color:#1f1f1f;font-weight:bold;font-family:'Liberation Sans',sans-serif;transform:scaleX(1.0136);">Unit Price</div>
<div class="t" id="t76" style="left:1071.70px;top:520px;font-size:13px;line-height:13px;color:#1f1f1f;font-weight:bold;font-family:'Liberation Sans',sans-serif;transform:scaleX(0.9111);">Taxes</div>
<div class="t" id="t77" style="left:1163.50px;top:520px;font-size:13px;line-height:13px;color:#1f1f1f;font-weight:bold;font-family:'Liberation Sans',sans-serif;transform:scaleX(0.9939);">Amount</div>
<div class="t" id="t78" style="left:487.53px;top:548px;font-size:14px;line-height:14px;color:#2a2a2a;font-weight:normal;font-family:'Liberation Sans',sans-serif;transform:scaleX(0.9716);">[RENT002] Meeting Room</div>
<div class="t" id="t79" style="left:487.51px;top:568px;font-size:14px;line-height:14px;color:#2a2a2a;font-weight:normal;font-family:'Liberation Sans',sans-serif;transform:scaleX(0.9944);">10/2/20, 9:55 PM to 10/5/20, 9:55 PM</div>
<div class="t" id="t80" style="left:894.90px;top:548px;font-size:14px;line-height:14px;color:#2a2a2a;font-weight:normal;font-family:'Liberation Sans',sans-serif;transform:scaleX(1.0038);">3.00</div>
<div class="t" id="t81" style="left:983.50px;top:548px;font-size:14px;line-height:14px;color:#2a2a2a;font-weight:normal;font-family:'Liberation Sans',sans-serif;transform:scaleX(0.9881);">450.00</div>
<div class="t" id="t82" style="left:1059.65px;top:548px;font-size:14px;line-height:14px;color:#2a2a2a;font-weight:normal;font-family:'Liberation Sans',sans-serif;transform:scaleX(0.9543);">15.00%</div>
<div class="t" id="t83" style="left:1149.00px;top:548px;font-size:14px;line-height:14px;color:#2a2a2a;font-weight:normal;font-family:'Liberation Sans',sans-serif;transform:scaleX(0.9545);">$ 1,350.00</div>
<div class="t" id="t84" style="left:487.54px;top:597px;font-size:14px;line-height:14px;color:#2a2a2a;font-weight:normal;font-family:'Liberation Sans',sans-serif;transform:scaleX(0.9607);">[FURN_8888] Office Lamp</div>
<div class="t" id="t85" style="left:894.90px;top:597px;font-size:14px;line-height:14px;color:#2a2a2a;font-weight:normal;font-family:'Liberation Sans',sans-serif;transform:scaleX(1.0038);">5.00</div>
<div class="t" id="t86" style="left:991.30px;top:597px;font-size:14px;line-height:14px;color:#2a2a2a;font-weight:normal;font-family:'Liberation Sans',sans-serif;transform:scaleX(0.9629);">40.00</div>
<div class="t" id="t87" style="left:1160.20px;top:597px;font-size:14px;line-height:14px;color:#2a2a2a;font-weight:normal;font-family:'Liberation Sans',sans-serif;transform:scaleX(0.9593);">$ 200.00</div>
<div class="t" id="t88" style="left:995.48px;top:641px;font-size:13px;line-height:13px;color:#1f1f1f;font-weight:bold;font-family:'Liberation Sans',sans-serif;transform:scaleX(1.0240);">Subtotal</div>
<div class="t" id="t89" style="left:1148.40px;top:640px;font-size:14px;line-height:14px;color:#2a2a2a;font-weight:normal;font-family:'Liberation Sans',sans-serif;transform:scaleX(0.9561);">$ 1,550.00</div>
<div class="t" id="t90" style="left:996.50px;top:669px;font-size:14px;line-height:14px;color:#2a2a2a;font-weight:normal;font-family:'Liberation Sans',sans-serif;transform:scaleX(0.9151);">Tax 15%</div>
<div class="t" id="t91" style="left:1159.40px;top:669px;font-size:14px;line-height:14px;color:#2a2a2a;font-weight:normal;font-family:'Liberation Sans',sans-serif;transform:scaleX(0.9648);">$ 202.50</div>
<div class="t" id="t92" style="left:996.50px;top:699px;font-size:13px;line-height:13px;color:#1f1f1f;font-weight:bold;font-family:'Liberation Sans',sans-serif;transform:scaleX(1.0207);">Total</div>
<div class="t" id="t93" style="left:1148.40px;top:698px;font-size:14px;line-height:14px;color:#2a2a2a;font-weight:normal;font-family:'Liberation Sans',sans-serif;transform:scaleX(0.9561);">$ 1,752.50</div>
<div class="t" id="t94" style="left:1188.85px;top:109px;font-size:13px;line-height:13px;color:#ffffff;font-weight:normal;font-family:'Liberation Sans',sans-serif;transform:scaleX(0.9526);-webkit-text-stroke:0.4px #ffffff;">PRINT</div>
<div class="t" id="t95" style="left:1255.25px;top:108px;font-size:13px;line-height:13px;color:#bdbdbd;font-weight:normal;font-family:'Liberation Sans',sans-serif;transform:scaleX(1.0548);">1 / 54</div>
<svg style="left:0;top:0" width="1366" height="768"><path d="M928 297.3 L940.1 314.6 L925 313.7 L918.9 312.6 L927.8 306.9 Z" fill="#ff0000"/></svg>

</body></html>
